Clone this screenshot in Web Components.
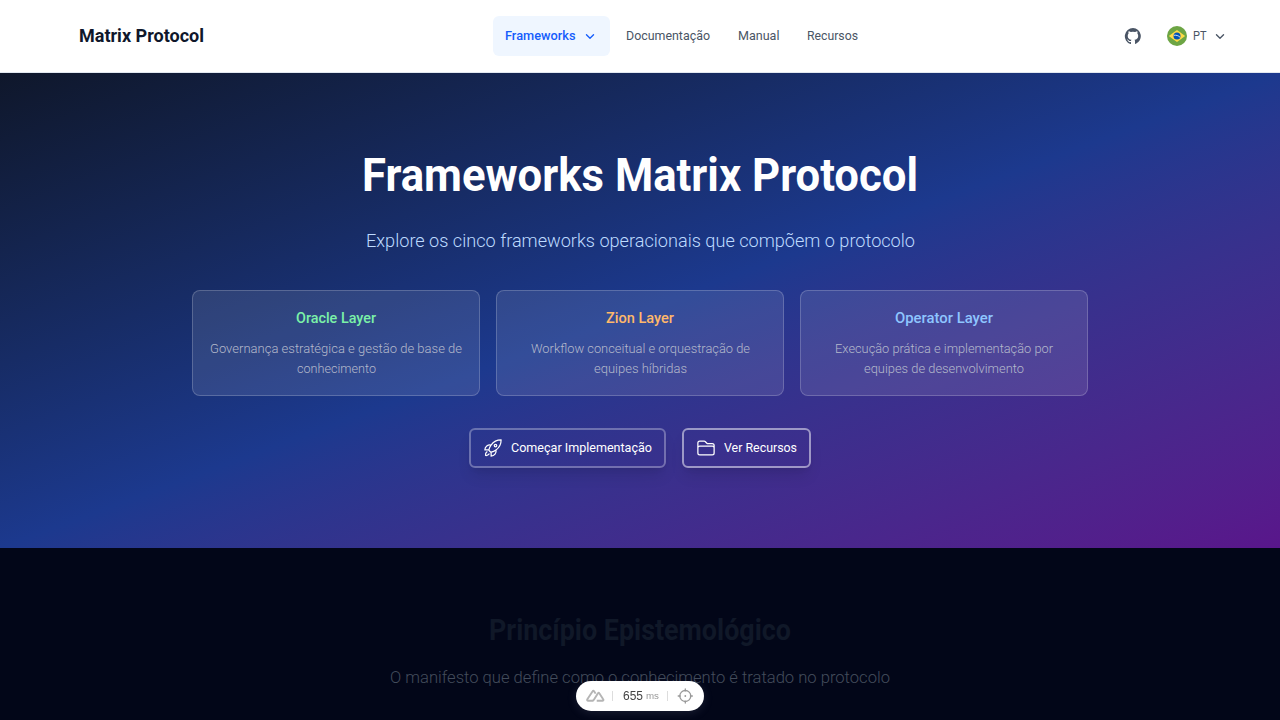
<!DOCTYPE html>
<html lang="pt-BR">
<head>
<meta charset="utf-8">
<title>Matrix Protocol</title>
<style>
html,body{margin:0;height:720px;overflow:hidden;background:#020618}
body{font-family:Roboto,"Liberation Sans",sans-serif}
</style>
</head>
<body>
<matrix-page></matrix-page>
<script>
const define=(name,html,connected)=>customElements.define(name,class extends HTMLElement{
  connectedCallback(){
    if(this.shadowRoot)return;
    this.attachShadow({mode:'open'}).innerHTML=html;
    if(connected)connected.call(this,this.shadowRoot);
  }
});

/* One line of text condensed or widened to a given measure. */
define('fit-text',`<style>:host{display:block;white-space:nowrap;flex:none}span{display:inline-block;transform-origin:0 50%}</style><span><slot></slot></span>`,function(r){
  const w=+this.getAttribute('w'),s=r.querySelector('span');
  this.style.width=w+'px';
  const fit=()=>{s.style.transform='none';const n=s.getBoundingClientRect().width;if(n)s.style.transform=`scaleX(${w/n})`};
  fit();
  document.fonts.ready.then(fit);
});

define('ui-chevron',`<style>:host{display:block;width:16px;height:16px;flex:none}svg{display:block}</style>
<svg width="16" height="16" viewBox="0 0 24 24" fill="none" stroke="currentColor" stroke-width="2" stroke-linecap="round" stroke-linejoin="round"><path d="m6.700 10 5.300 5.300 5.300-5.300"/></svg>`);

define('nav-link',`<style>
:host{display:flex;align-items:center;height:40px;padding:0 12px;gap:6px;border-radius:6px;color:#4a5565;font-size:13px;box-sizing:border-box}
:host([active]){background:#eff6ff;color:#155dfc;font-weight:500}
</style><slot></slot>`);

define('site-header',`<style>
:host{display:grid;grid-template-columns:414px auto 1fr;align-items:center;height:73px;box-sizing:border-box;padding:0 52px 1px 79px;background:#fff;border-bottom:1px solid #e2e8f0}
.brand{font-size:18.5px;font-weight:700;color:#0f172b}
nav{display:flex;gap:4px}
.tools{display:flex;justify-content:flex-end;align-items:center;color:#4a5565;font-size:13px}
svg{display:block;flex:none}
.flag{margin:0 6px 0 25px}
.tools ui-chevron{margin-left:6px}
</style>
<fit-text class="brand" w="125">Matrix Protocol</fit-text>
<nav>
<nav-link active><fit-text w="70.5">Frameworks</fit-text><ui-chevron></ui-chevron></nav-link>
<nav-link><fit-text w="84">Documentação</fit-text></nav-link>
<nav-link><fit-text w="41.5">Manual</fit-text></nav-link>
<nav-link><fit-text w="51">Recursos</fit-text></nav-link>
</nav>
<div class="tools">
<svg width="18" height="18" viewBox="0 0 24 24" fill="currentColor"><path d="M12 1.3a11 11 0 0 0-3.5 21.4c.6.1.8-.2.8-.5v-2.1c-3.1.7-3.8-1.3-3.8-1.3-.5-1.300-1.200-1.600-1.200-1.600-1-.7.1-.7.1-.7 1.100.1 1.700 1.100 1.700 1.100 1 1.700 2.600 1.200 3.200.9.100-.7.400-1.200.7-1.500-2.400-.3-5-1.200-5-5.400 0-1.200.4-2.200 1.100-3-.1-.300-.500-1.400.1-2.900 0 0 .9-.3 3 1.100a10.500 10.500 0 0 1 5.500 0c2.100-1.400 3-1.100 3-1.100.6 1.500.2 2.600.1 2.900.7.800 1.100 1.800 1.100 3 0 4.200-2.600 5.100-5 5.400.4.300.8 1 .8 2v3c0 .3.2.6.8.5A11 11 0 0 0 12 1.300Z"/></svg>
<svg class="flag" width="20" height="20" viewBox="0 0 20 20"><circle cx="10" cy="10" r="10" fill="#6da544"/><path d="m10 3.900 8.200 6.100-8.200 6.100L1.800 10Z" fill="#ffda44"/><circle cx="10" cy="10" r="3.500" fill="#0052b4"/><path d="M6.800 9.300c2.300-.4 4.700.3 6.300 2" fill="none" stroke="#f0f0f0" stroke-width=".9"/></svg>
<fit-text w="13.5">PT</fit-text><ui-chevron></ui-chevron>
</div>`);

define('layer-card',`<style>
:host{display:flex;flex-direction:column;align-items:center;box-sizing:border-box;height:106px;padding:17px 0 0;background:rgba(255,255,255,.1);border:1px solid rgba(255,255,255,.2);border-radius:8px;color:#b4b9cb;font-size:13px;line-height:20px;font-weight:300}
.t{font-size:14.5px;font-weight:500;line-height:22px;margin-bottom:9px}
</style><div class="t"><slot name="title"></slot></div><slot></slot>`);

define('hero-button',`<style>
:host{display:flex;align-items:center;gap:8px;height:40px;box-sizing:border-box;border:2px solid rgba(255,255,255,.3);border-radius:6px;padding:0 12px;color:#fff;font-size:13px;box-shadow:0 10px 15px -3px rgba(0,0,0,.1),0 4px 6px -4px rgba(0,0,0,.1)}
:host([strong]){border-color:rgba(255,255,255,.5)}
::slotted(svg){display:block;flex:none}
::slotted(fit-text){padding-bottom:2px}
</style><slot></slot>`);

define('hero-section',`<style>
:host{display:flex;flex-direction:column;align-items:center;height:475px;box-sizing:border-box;padding-top:73px;background:linear-gradient(to bottom right in oklab,#0f172b,#1c398e 50%,#59168b)}
h1{margin:0;font-size:45.5px;line-height:60px;font-weight:700;color:#fff}
p{margin:19px 0 0;font-size:18.500px;line-height:32px;font-weight:300;color:#bedbff}
.cards{display:grid;grid-template-columns:repeat(3,288px);gap:16px;margin-top:33px}
.buttons{display:flex;gap:16px;margin-top:32px}
</style>
<h1><fit-text w="556">Frameworks Matrix Protocol</fit-text></h1>
<p><fit-text w="549">Explore os cinco frameworks operacionais que compõem o protocolo</fit-text></p>
<div class="cards">
<layer-card><fit-text slot="title" w="80" style="color:#7bf1a8">Oracle Layer</fit-text><fit-text w="252">Governança estratégica e gestão de base de</fit-text><fit-text w="79">conhecimento</fit-text></layer-card>
<layer-card><fit-text slot="title" w="68" style="color:#ffb86a">Zion Layer</fit-text><fit-text w="219">Workflow conceitual e orquestração de</fit-text><fit-text w="93">equipes híbridas</fit-text></layer-card>
<layer-card><fit-text slot="title" w="98" style="color:#8ec5ff">Operator Layer</fit-text><fit-text w="218">Execução prática e implementação por</fit-text><fit-text w="160">equipes de desenvolvimento</fit-text></layer-card>
</div>
<div class="buttons">
<hero-button><svg width="20" height="20" viewBox="0 0 24 24" fill="none" stroke="currentColor" stroke-width="1.500" stroke-linecap="round" stroke-linejoin="round"><path d="M15.590 14.370a6 6 0 0 1-5.840 7.380v-4.800m5.840-2.580a14.980 14.980 0 0 0 6.160-12.120A14.980 14.980 0 0 0 9.631 8.410m5.960 5.960a14.926 14.926 0 0 1-5.841 2.580m-.119-8.540a6 6 0 0 0-7.381 5.840h4.800m2.581-5.840a14.927 14.927 0 0 0-2.580 5.840m2.699 2.700c-.103.021-.207.041-.311.060a15.090 15.090 0 0 1-2.448-2.448 14.900 14.900 0 0 1 .060-.312m-2.240 2.390a4.493 4.493 0 0 0-1.757 4.306 4.493 4.493 0 0 0 4.306-1.758M16.500 9a1.500 1.500 0 1 1-3 0 1.500 1.500 0 0 1 3 0Z"/></svg><fit-text w="141">Começar Implementação</fit-text></hero-button>
<hero-button strong><svg width="20" height="20" viewBox="0 0 24 24" fill="none" stroke="currentColor" stroke-width="1.500" stroke-linecap="round" stroke-linejoin="round"><path d="M2.250 12.750V12A2.250 2.250 0 0 1 4.500 9.750h15A2.250 2.250 0 0 1 21.750 12v.750m-8.690-6.440-2.120-2.120a1.500 1.500 0 0 0-1.061-.440H4.500A2.250 2.250 0 0 0 2.250 6v12a2.250 2.250 0 0 0 2.250 2.250h15A2.250 2.250 0 0 0 21.750 18V9a2.250 2.250 0 0 0-2.250-2.250h-5.379a1.500 1.500 0 0 1-1.060-.440Z"/></svg><fit-text w="73">Ver Recursos</fit-text></hero-button>
</div>`);

define('principle-section',`<style>
:host{display:flex;flex-direction:column;align-items:center;height:172px;box-sizing:border-box;padding-top:62px;background:#020618}
h2{margin:0;font-size:29px;line-height:40px;font-weight:700;color:#101828}
p{margin:11px 0 0;font-size:17px;line-height:32px;font-weight:300;color:#434c5b}
</style>
<h2><fit-text w="302">Princípio Epistemológico</fit-text></h2>
<p><fit-text w="500">O manifesto que define como o conhecimento é tratado no protocolo</fit-text></p>`);

define('dev-pill',`<style>
:host{position:fixed;left:576px;top:681px;width:128px;height:30px;box-sizing:border-box;display:flex;align-items:center;padding:0 10px 0 10px;background:#fff;border-radius:15px;font-family:"Liberation Sans",Arial,sans-serif;color:#444;box-shadow:0 2px 10px rgba(120,120,150,.2)}
svg{display:block;flex:none}
i{width:1px;height:10px;background:#ddd;flex:none}
.n{font-size:12px;margin-left:10px}.m{font-size:9.500px;color:#999;margin-left:3px;padding-bottom:1px}
</style>
<svg width="19" height="16" viewBox="0 0 20 16" fill="none" stroke="#b5b5b5" stroke-width="2" stroke-linejoin="round"><path d="M8 13H2.200c-.9 0-1.200-.8-.8-1.500L7 2.900c.4-.7 1.100-.7 1.500 0l1.600 2.600M11.300 13h6c.9 0 1.300-.8.8-1.500L14 5.100c-.4-.7-1-.7-1.400 0L8.300 12c-.400.700-1 1-1.800 1"/></svg>
<i style="margin-left:7px"></i><fit-text class="n" w="20">655</fit-text><fit-text class="m" w="13">ms</fit-text><i style="margin-left:8px"></i>
<svg style="margin-left:9px" width="16" height="16" viewBox="0 0 16 16" fill="none" stroke="#999" stroke-width="1.300" stroke-linecap="round"><circle cx="8.300" cy="8" r="5.500"/><path d="M8.300 .9v2M8.300 13.100v2M1.200 8h2M13.400 8h2"/><circle cx="8.300" cy="8" r=".9" fill="#999" stroke="none"/></svg>`);

define('matrix-page',`<style>:host{display:block;width:1280px;height:720px;overflow:hidden}</style>
<site-header></site-header><hero-section></hero-section><principle-section></principle-section><dev-pill></dev-pill>`);
</script>
</body>
</html>
